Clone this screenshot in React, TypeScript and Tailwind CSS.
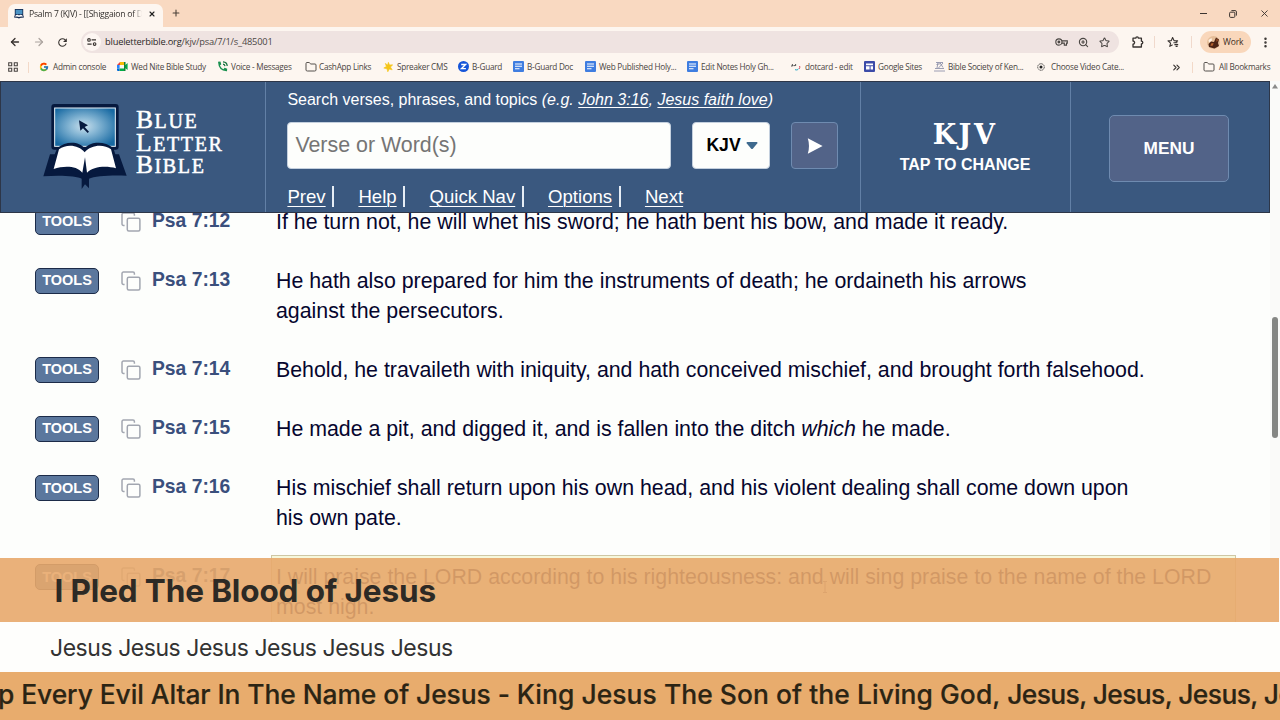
import type { ReactNode } from "react";
import { ArrowLeft, ArrowRight, ChevronsRight, Folder, MoreVertical, Plus, Star, X, ZoomIn } from "lucide-react";
import { FcGoogle } from "react-icons/fc";
import { MdRefresh } from "react-icons/md";

function DocIcon() {
  return (
    <svg viewBox="0 0 11 11" className="size-[11px]">
      <rect width="11" height="11" rx="1" fill="#3f7de0" />
      <path d="M2 3h7M2 5.3h7M2 7.8h4.5" stroke="#fff" strokeWidth="1.1" />
    </svg>
  );
}

function MeetIcon() {
  return (
    <svg viewBox="0 0 11 9" className="h-[9px] w-[11px]">
      <path d="M3 0h5v3H3z" fill="#fbbc04" />
      <path d="M3 0v3H0z" fill="#ea4335" />
      <path d="M0 3h2.6v3.4H0z" fill="#2684fc" />
      <path d="M0 6.4h2.6V9H1a1 1 0 0 1-1-1z" fill="#0066da" />
      <path d="M2.6 6.4H8V9H2.6zM8 3.2 10.6 1v7L8 6z" fill="#00ac47" />
      <path d="M7 0h1.5v9H7z" fill="#188038" />
    </svg>
  );
}

function VoiceIcon() {
  return (
    <svg viewBox="0 0 11 11" className="size-[11px]" fill="none">
      <path d="M1 .8 3.4.6 4.3 3.3 2.9 4.5Q4 7 6.4 8.2L7.6 6.8 10.2 7.7 10 10.2Q1.5 10.5 1 .8z" fill="#1a9150" />
      <path d="M6 .8a4.4 4.4 0 0 1 4.2 4.3M6 3.1A2.2 2.2 0 0 1 8 5.1" stroke="#14703c" strokeWidth="1.2" />
    </svg>
  );
}

function BGuardIcon() {
  return (
    <svg viewBox="0 0 11 11" className="size-[11px]">
      <circle cx="5.5" cy="5.5" r="5.5" fill="#1554d8" />
      <path d="M3.2 3.5h4.4L3.5 7.6h4.4" fill="none" stroke="#fff" strokeWidth="1.4" />
    </svg>
  );
}

function SpreakerIcon() {
  return (
    <svg viewBox="0 0 10 10" className="size-[10px]">
      <path d="M5.4.3 6.5 3l3.2-.2-2.2 2.3 1.7 2.7-3-.7-1.4 2.7-.8-3L.8 6l2.6-1.5L2.3 1.4 4.6 3z" fill="#f5c518" stroke="#f5c518" strokeWidth=".6" />
    </svg>
  );
}

function DotcardIcon() {
  return (
    <svg viewBox="0 0 10 8" className="h-[8px] w-[10px]" fill="none">
      <path d="M0 3h1.6M1.4 1v2M2.4 2.6h1.7M4.6 1v2" stroke="#444" strokeWidth=".9" />
      <path d="M4 6.6c1.6.8 3.2.2 3.4-1" stroke="#22a6c4" />
      <path d="M8.4 5.8c.4-.6.5-1.6.3-2.8" stroke="#d8475b" />
    </svg>
  );
}

function SitesIcon() {
  return (
    <svg viewBox="0 0 11 11" className="size-[11px]">
      <rect width="11" height="11" rx="1" fill="#3c4ba8" />
      <path d="M2 2.4h7v1.8H2zM2 5.2h3.6v3.2H2zM6.6 5.2H9v3.2H6.6z" fill="#fff" />
    </svg>
  );
}

function BibleSocietyIcon() {
  return (
    <svg viewBox="0 0 11 11" className="size-[11px]" fill="none" stroke="#8388a3" strokeWidth=".8">
      <path d="M2 1.5h7M2.5 3.5 7 2.5M4 1.5 3 7M6.5 2.5 9 6.5M9 2 4.5 7M1 7.5h9M0 10h11" />
    </svg>
  );
}

function TargetIcon() {
  return (
    <svg viewBox="0 0 8 8" className="size-[8px]">
      <circle cx="4" cy="4" r="3.3" fill="none" stroke="#333" strokeWidth=".8" strokeDasharray="1.7 .5" />
      <circle cx="4" cy="4" r="1.5" fill="#222" />
    </svg>
  );
}

function AppsIcon() {
  return (
    <svg viewBox="0 0 10 10" className="size-[10px]" fill="none" stroke="#4a4643" strokeWidth="1.1">
      <path d="M.7.7h3v3h-3zM6.3.7h3v3h-3zM.7 6.3h3v3h-3zM6.3 6.3h3v3h-3z" />
    </svg>
  );
}

function KeyIcon() {
  return (
    <svg viewBox="0 0 13 8" className="h-[8px] w-[13px]" fill="none" stroke="#4a4643" strokeWidth="1.1">
      <circle cx="3.9" cy="4" r="3.1" />
      <path d="M6.9 2.9h5.4v2.2h-.8v2H9.3v-2H6.9" />
      <circle cx="3.9" cy="4" r=".9" fill="#4a4643" />
    </svg>
  );
}

function TuneIcon() {
  return (
    <svg viewBox="0 0 10 8" className="h-[8px] w-[10px]" fill="none" stroke="#37322f" strokeWidth="1.1">
      <circle cx="2" cy="1.9" r="1.3" />
      <path d="M4.6 1.9H9M.4 6.1h4.2" />
      <circle cx="7.6" cy="6.1" r="1.3" />
    </svg>
  );
}

function ExtensionsIcon() {
  return (
    <svg viewBox="0 0 12 12" className="size-[12px]" fill="none" stroke="#37322f" strokeWidth="1.3" strokeLinejoin="round">
      <path d="M1 2.2h2.8a1.3 1.3 0 0 1 2.6 0h3v3a1.4 1.4 0 0 1 0 2.8v3H1V8.2a1.6 1.6 0 0 0 0-3.2z" />
    </svg>
  );
}

function StarListIcon() {
  return (
    <svg viewBox="0 0 12 12" className="size-[12px]" fill="none" stroke="#37322f" strokeWidth="1.1" strokeLinejoin="round">
      <path d="M5.6 8.7 2.8 10.4l.8-3.3L1 4.9l3.3-.3 1.3-3.1L7 4.6l3.6.3-2 1.7" />
      <path d="M6.4 6.8h4M7.4 8.6h3.8M8.6 10.4h2" />
    </svg>
  );
}

function Favicon() {
  return (
    <svg viewBox="0 0 10 10" className="size-[10px]">
      <path d="M.8 0h8.4v6L10 8.6 5.5 9 5 10l-.6-1L0 8.6.8 6z" fill="#12284f" />
      <path d="M1.6.8h6.8v4.4H1.6z" fill="#4b93c4" />
      <path d="M1.7 6.2q2-1 3.3.2 1.3-1.2 3.3-.2l.5 1.6q-2.4-.6-3.8.3-1.4-.9-3.8-.3z" fill="#fff" />
    </svg>
  );
}

function CopyIcon() {
  return (
    <svg viewBox="0 0 20 20" className="h-[20px] w-[20px]" fill="none" stroke="#a2a6b0" strokeWidth="1.5">
      <rect x="6.3" y="6.3" width="12.6" height="12.6" rx="1.5" />
      <path d="M3.6 13.4H2.4a1.4 1.4 0 0 1-1.4-1.4V2.4A1.4 1.4 0 0 1 2.4 1H12a1.4 1.4 0 0 1 1.4 1.4v1.3" />
    </svg>
  );
}

function Logo() {
  return (
    <svg viewBox="130 65 252 264" className="h-[88px] w-[84px] shrink-0">
      <defs>
        <radialGradient id="screen" cx="48%" cy="48%" r="62%">
          <stop offset="0" stopColor="#c9dfec" />
          <stop offset=".35" stopColor="#8ab9d6" />
          <stop offset="1" stopColor="#1769a2" />
        </radialGradient>
      </defs>
      <rect x="155" y="71" width="202" height="137" rx="9" fill="#06193e" />
      <rect x="165" y="83" width="182" height="115" fill="url(#screen)" stroke="#e8f1f7" strokeWidth="3" />
      <path
        d="M151 222h14l8-19c26-22 66-20 82 1 16-21 60-23 86-1l6 19h11l23 64c-42-2-96 0-113 9v29l-12-12-10 14v-31c-14-9-72-11-115-7z"
        fill="#06193e"
      />
      <path
        d="M178 207c22-17 59-14 77 9 18-23 58-26 79-9l15 57c-29-8-69-6-87 13l-6-46-8 46c-17-21-55-21-86-11z"
        fill="#fff"
      />
      <path d="m238 120 4 31 8-7 14 14 4-4-13-14 10-5z" fill="#06193e" />
    </svg>
  );
}

type Bookmark = { label: string; icon: ReactNode; width: string };

const bookmarks: Bookmark[] = [
  { label: "Admin console", icon: <FcGoogle size={10} />, width: "w-[78px]" },
  { label: "Wed Nite Bible Study", icon: <MeetIcon />, width: "w-[100px]" },
  { label: "Voice - Messages", icon: <VoiceIcon />, width: "w-[88px]" },
  { label: "CashApp Links", icon: <Folder size={12} color="#55504d" strokeWidth={2} />, width: "w-[78px]" },
  { label: "Spreaker CMS", icon: <SpreakerIcon />, width: "w-[75px]" },
  { label: "B-Guard", icon: <BGuardIcon />, width: "w-[55px]" },
  { label: "B-Guard Doc", icon: <DocIcon />, width: "w-[72px]" },
  { label: "Web Published Holy...", icon: <DocIcon />, width: "w-[102px]" },
  { label: "Edit Notes Holy Gh...", icon: <DocIcon />, width: "w-[104px]" },
  { label: "dotcard - edit", icon: <DotcardIcon />, width: "w-[73px]" },
  { label: "Google Sites", icon: <SitesIcon />, width: "w-[70px]" },
  { label: "Bible Society of Ken...", icon: <BibleSocietyIcon />, width: "w-[103px]" },
  { label: "Choose Video Cate...", icon: <TargetIcon />, width: "w-[100px]" },
];

const verses: { id: string; body: ReactNode; highlighted?: boolean }[] = [
  { id: "7:12", body: "If he turn not, he will whet his sword; he hath bent his bow, and made it ready." },
  { id: "7:13", body: <>He hath also prepared for him the instruments of death; he ordaineth his arrows<br />against the persecutors.</> },
  { id: "7:14", body: "Behold, he travaileth with iniquity, and hath conceived mischief, and brought forth falsehood." },
  { id: "7:15", body: <>He made a pit, and digged it, and is fallen into the ditch <i>which</i> he made.</> },
  { id: "7:16", body: <>His mischief shall return upon his own head, and his violent dealing shall come down upon<br />his own pate.</> },
  {
    id: "7:17",
    highlighted: true,
    body: <>I will praise the LORD according to his righteousness: and will sing praise to the name of the LORD<br />most high.</>,
  },
];

function BrowserChrome() {
  return (
    <div className="h-[81px] bg-[#fdf6f0] font-['Open_Sans',sans-serif] text-[#4a4542]">
      <div className="flex h-[27px] items-end bg-[#f9d9c1]">
        <div className="ml-[8px] flex h-[23px] w-[155px] items-center rounded-t-[7px] bg-[#fdf6f0] pb-[3px] pl-[6px]">
          <Favicon />
          <span className="ml-[5px] w-[113px] overflow-hidden bg-linear-to-r from-[#2d2a28] from-92% to-transparent bg-clip-text text-[8.6px] tracking-[-0.25px] whitespace-nowrap text-transparent">
            Psalm 7 (KJV) - [[Shiggaion of Da
          </span>
          <X size={8} color="#222" strokeWidth={3.4} className="ml-[6px]" />
        </div>
        <Plus size={10} color="#4a4038" strokeWidth={2.6} className="mb-[9px] ml-[8px]" />
        <div className="mr-[10px] mb-[8px] ml-auto flex items-center gap-[22px]">
          <div className="h-px w-[7px] bg-[#3c3430]" />
          <svg viewBox="0 0 8 8" className="size-[8px]" fill="none" stroke="#3c3430">
            <rect x=".6" y="2.2" width="5.2" height="5.2" rx="1" />
            <path d="M2.4.6h3.8a1.2 1.2 0 0 1 1.2 1.2v3.8" />
          </svg>
          <X size={11} color="#3c3430" strokeWidth={2} />
        </div>
      </div>

      <div className="flex h-[30px] items-center pl-[9px]">
        <ArrowLeft size={12} color="#37322f" strokeWidth={2.6} />
        <ArrowRight size={12} color="#aaa29d" strokeWidth={2.4} className="ml-[12px]" />
        <MdRefresh size={13} color="#37322f" className="ml-[11px]" />
        <div className="ml-[12px] flex h-[22px] w-[1038px] items-center rounded-full bg-[#efe3e1] pr-[9px] pl-[2px]">
          <div className="flex size-[18px] items-center justify-center rounded-full bg-[#fdf6f2]">
            <TuneIcon />
          </div>
          <span className="ml-[4px] text-[9.3px] tracking-[-0.2px] whitespace-nowrap text-[#4d4745]">
            <span className="text-[#2b2726]">blueletterbible.org</span>/kjv/psa/7/1/s_485001
          </span>
          <div className="ml-auto flex items-center gap-[10px]">
            <KeyIcon />
            <ZoomIn size={11} color="#4a4643" strokeWidth={2.4} />
            <Star size={11} color="#4a4643" strokeWidth={2.2} />
          </div>
        </div>
        <div className="ml-[13px]">
          <ExtensionsIcon />
        </div>
        <div className="ml-[10px] h-[12px] w-px bg-[#f0d9cc]" />
        <div className="ml-[12px]">
          <StarListIcon />
        </div>
        <div className="ml-[12px] h-[12px] w-px bg-[#f0d9cc]" />
        <div className="ml-[8px] flex h-[22px] w-[51px] items-center rounded-full bg-[#f9d7bb] pl-[7px]">
          <svg viewBox="0 0 13 13" className="size-[13px]">
            <circle cx="6.5" cy="6.5" r="6.5" fill="#e5bd98" />
            <path d="M1.5 8 4 5.5 7 6 9 1.5 12 3.5 11 7 12 10 7.5 12.5 2 11z" fill="#4c2415" />
            <path d="M4 7.5 6.5 7 6 9.5 3.5 10zM9.5 2.5 11 4 9.6 6z" fill="#b5622f" />
            <path d="M1.5 4 4.5 2 5 4.5 2 6.5z" fill="#fff1e3" />
          </svg>
          <span className="ml-[3px] text-[8.5px] tracking-[-0.15px] text-[#3c2b22]">Work</span>
        </div>
        <MoreVertical size={13} color="#37322f" strokeWidth={2.6} className="ml-[8px]" />
      </div>

      <div className="flex h-[20px] items-center pl-[8px] text-[8.2px] tracking-[-0.25px] whitespace-nowrap">
        <AppsIcon />
        <div className="mr-[10px] ml-[10px] h-[11px] w-px bg-[#f3d9c8]" />
        {bookmarks.map((b) => (
          <div key={b.label} className={`flex shrink-0 items-center ${b.width}`}>
            <span className="flex w-[14px] shrink-0 items-center">{b.icon}</span>
            {b.label}
          </div>
        ))}
        <ChevronsRight size={11} color="#37322f" strokeWidth={2.4} className="ml-[34px]" />
        <div className="ml-[10px] h-[11px] w-px bg-[#f3d9c8]" />
        <Folder size={12} color="#55504d" className="mr-[4px] ml-[10px]" />
        All Bookmarks
      </div>
    </div>
  );
}

function NavLink({ label, last }: { label: string; last?: boolean }) {
  return (
    <div className={last ? "" : "mr-[24px] border-r-2 border-[#e6edf5] pr-[6.8px]"}>
      <span className="underline decoration-1 underline-offset-[3px]">{label}</span>
    </div>
  );
}

function SiteHeader() {
  return (
    <header className="relative z-10 flex h-[132px] border border-[#2d3648] bg-[#3a587f] text-white">
      <div className="flex w-[264px] pt-[20px] pl-[42px]">
        <Logo />
        <div className="ml-[9px] pt-[7px] font-['Liberation_Serif',serif] text-[20px] tracking-[1.6px] [-webkit-text-stroke:0.5px_white]">
          {["BLUE", "LETTER", "BIBLE"].map((word) => (
            <div key={word} className="flex h-[22.5px] items-baseline leading-[22.5px]">
              <span className="text-[25.5px] leading-[22.5px]">{word[0]}</span>
              {word.slice(1)}
            </div>
          ))}
        </div>
      </div>

      <div className="w-[595px] border-l border-[#6280a6] pl-[21.4px]">
        <div className="mt-[8px] text-[16px] leading-[20px] whitespace-nowrap">
          Search verses, phrases, and topics{" "}
          <i>
            (e.g. <span className="underline underline-offset-2">John 3:16</span>,{" "}
            <span className="underline underline-offset-2">Jesus faith love</span>)
          </i>
        </div>
        <div className="mt-[12px] flex h-[47px]">
          <div className="flex w-[384px] items-center rounded-[4px] border border-[#c4d0de] bg-[#fdfefc] pl-[7px] text-[21.4px] text-[#757575]">
            Verse or Word(s)
          </div>
          <div className="ml-[21px] flex w-[78px] items-center rounded-[4px] border border-[#c4d0de] bg-[#fdfefc] pl-[13px] text-[17.6px] font-bold text-black">
            KJV
            <svg viewBox="0 0 12 7" className="ml-[5px] h-[7px] w-[12px]">
              <path d="M1 0h10l.6 1L7 6.4Q6 7.4 5 6.4L.4 1z" fill="#3f6a8e" />
            </svg>
          </div>
          <div className="ml-[21px] flex w-[47px] items-center justify-center rounded-[4px] border border-[#6f8bb0] bg-[#526388]">
            <svg viewBox="0 0 16 18" className="h-[18px] w-[16px]">
              <path d="M.8 1.2 15.6 9 .8 16.8Q3.2 9 .8 1.2z" fill="#fff" />
            </svg>
          </div>
        </div>
        <div className="mt-[17px] flex h-[21px] text-[18.6px] leading-[22px]">
          <NavLink label="Prev" />
          <NavLink label="Help" />
          <NavLink label="Quick Nav" />
          <NavLink label="Options" />
          <NavLink label="Next" last />
        </div>
      </div>

      <div className="flex w-[211px] flex-col items-center border-x border-[#6280a6] pt-[36px] pr-[1px]">
        <div className="font-['DejaVu_Serif',serif] text-[27px] leading-[34px] font-bold tracking-[2.5px]">KJV</div>
        <div className="mt-[3px] text-[16px] leading-[20px] font-bold">TAP TO CHANGE</div>
      </div>

      <div className="flex flex-1 items-start justify-center pt-[33px] pr-[2px]">
        <div className="flex h-[67px] w-[120px] items-center justify-center rounded-[5px] border border-[#6f8bb0] bg-[#526388] text-[17.3px] font-bold">
          MENU
        </div>
      </div>
    </header>
  );
}

function VerseRow({ id, body, highlighted }: { id: string; body: ReactNode; highlighted?: boolean }) {
  return (
    <div className="flex items-start pl-[35px]">
      <div className="mt-[2px] flex h-[26px] w-[64px] items-center justify-center rounded-[5px] border-[1.5px] border-[#1c2b48] bg-[#5b779d] text-[14.5px] font-bold text-white">
        TOOLS
      </div>
      <div className="mt-[5px] ml-[22px]">
        <CopyIcon />
      </div>
      <div className="-mt-[1px] ml-[11px] w-[119px] text-[19.3px] leading-[30px] font-bold text-[#3a4f7c]">Psa {id}</div>
      <div
        className={`-mt-[7px] -mb-[1px] w-[965px] border pt-[6px] pl-[4px] text-[21.34px] leading-[30px] whitespace-nowrap text-[#06062e] ${
          highlighted ? "h-[90px] border-[#cfc7a4] bg-[#f6f8dc]" : "border-transparent"
        }`}
      >
        {body}
      </div>
    </div>
  );
}

function LowerThird() {
  return (
    <div className="absolute inset-x-0 bottom-0 z-20 font-[Inter,sans-serif] whitespace-nowrap text-[#2d2a25]">
      <div className="flex h-[64px] w-[1279px] items-center bg-[#e8a96b]/90 pt-[2px] pl-[54.5px] text-[31.5px] font-bold tracking-[-0.14px]">
        I Pled The Blood of Jesus
      </div>
      <div className="flex h-[50px] items-center bg-[#fefefc] pt-[2px] pl-[50px] text-[23px] tracking-[-0.46px] text-[#333333]">
        Jesus Jesus Jesus Jesus Jesus Jesus
      </div>
      <div className="flex h-[48px] items-center overflow-hidden bg-[#e8ac6d] pb-[3px] text-[26.4px] font-medium text-[#2b2414] [-webkit-text-stroke:0.2px_#2b2414]">
        <span className="-ml-[2px] whitespace-pre">
          <span className="tracking-[-0.07px]">p Every Evil Altar In The Name of Jesus - </span>
          <span className="tracking-[0.07px]">King Jesus The Son of the Living God, </span>
          <span className="tracking-[-0.6px]">Jesus, Jesus, Jesus, Jesus</span>
        </span>
      </div>
    </div>
  );
}

export default function App() {
  return (
    <div className="relative flex h-[720px] w-[1280px] flex-col overflow-hidden bg-[#fdfefc] font-['Liberation_Sans',Arial,sans-serif]">
      <BrowserChrome />
      <div className="flex min-h-0 flex-1">
        <div className="w-[1270px] overflow-hidden">
          <SiteHeader />
          <main className="-mt-[6px] flex flex-col gap-[29.1px]">
            {verses.map((v) => (
              <VerseRow key={v.id} {...v} />
            ))}
          </main>
        </div>
        <div className="flex w-[10px] flex-col items-center bg-[#fafaf9] pt-[3px]">
          <svg viewBox="0 0 6 5" className="h-[5px] w-[6px]">
            <path d="M3 0 6 4.5H0z" fill="#8a8a8a" />
          </svg>
          <div className="mt-[228px] h-[121px] w-[6px] rounded-full bg-[#858684]" />
        </div>
      </div>
      {/* text cursor resting over the highlighted verse */}
      <svg viewBox="0 0 6 12" className="absolute top-[581px] left-[822px] h-[12px] w-[6px]" fill="none" stroke="#777">
        <path d="M1 .5h4M3 .5v11M1 11.5h4" />
      </svg>
      <LowerThird />
    </div>
  );
}
